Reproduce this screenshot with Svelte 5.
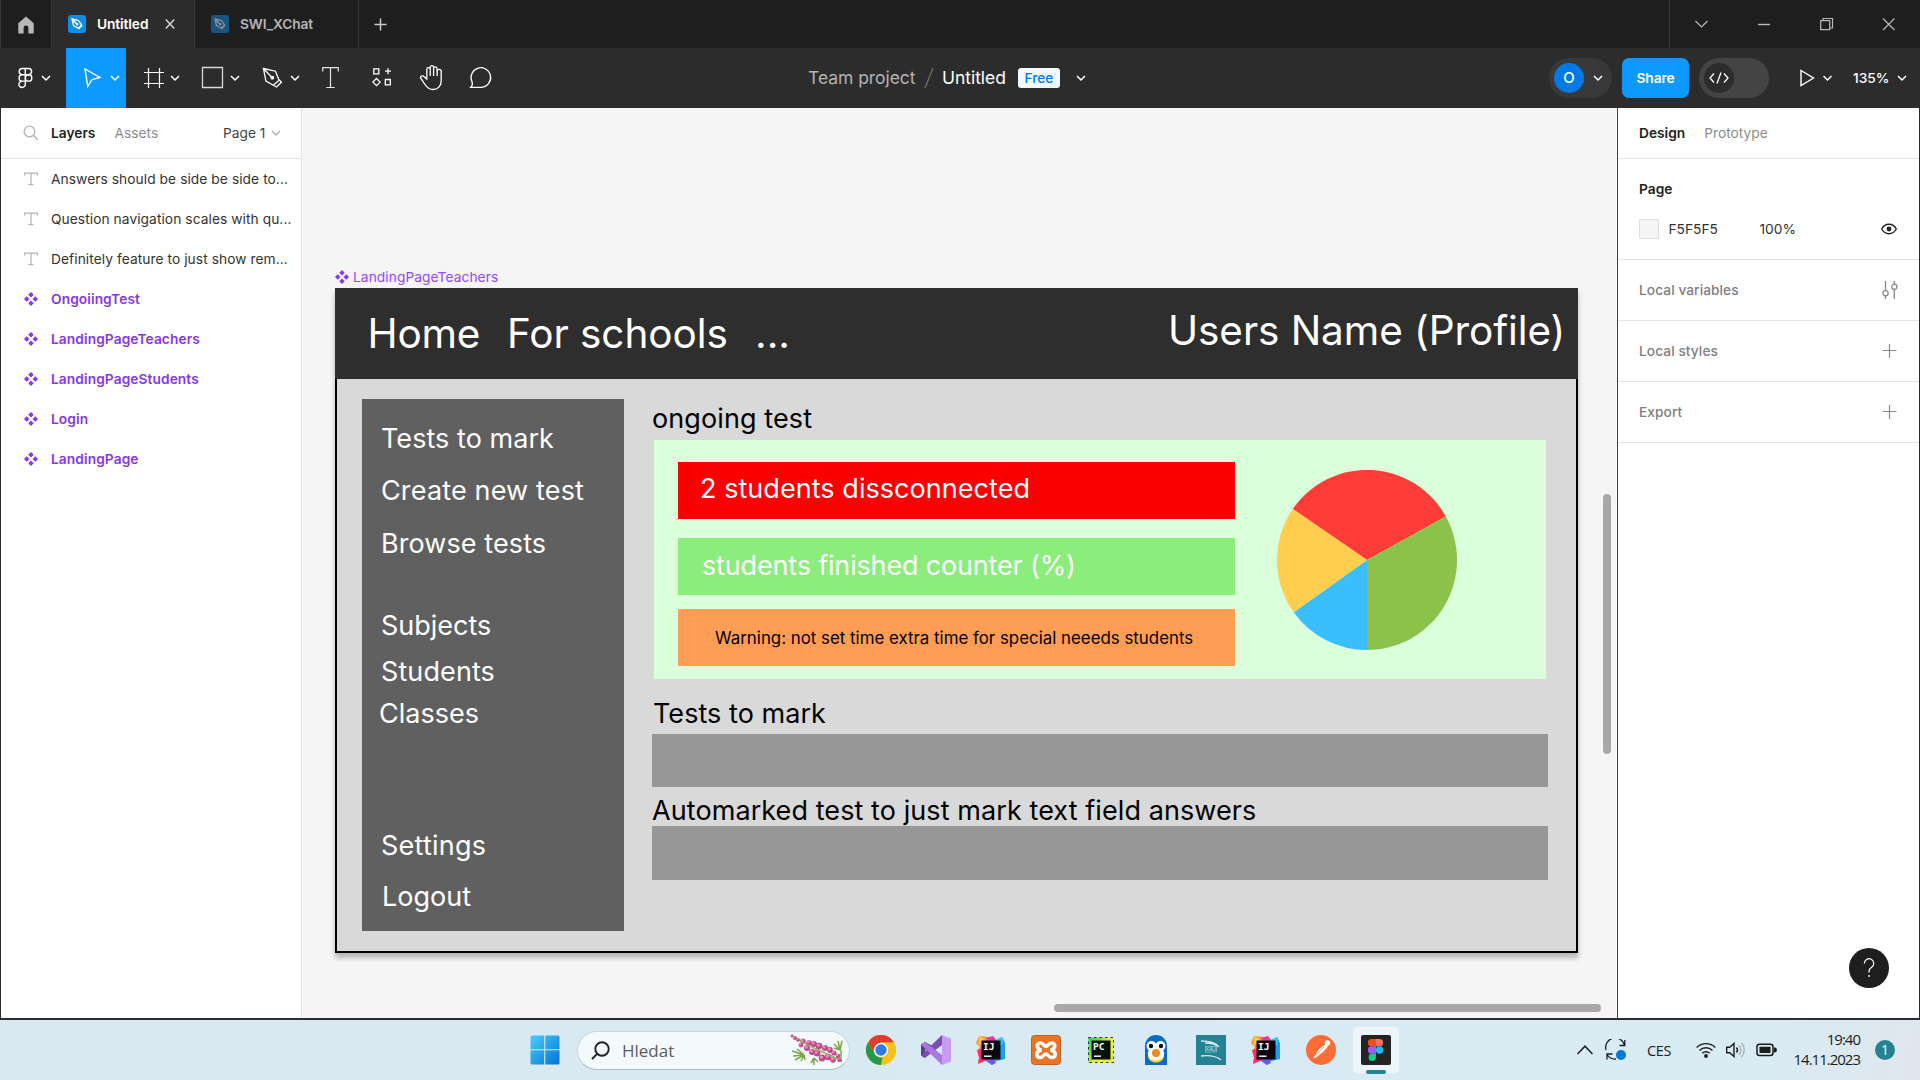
<script>
  const notes = [
    'Answers should be side be side to...',
    'Question navigation scales with qu...',
    'Definitely feature to just show rem...'
  ];
  const components = ['OngoiingTest', 'LandingPageTeachers', 'LandingPageStudents', 'Login', 'LandingPage'];

  // Shapes placed on the artboard, in canvas pixels relative to its corner.
  const shapes = [
    { x: 0, y: 0, w: 1243, h: 91, fill: '#2e2e2e' },
    { x: 27, y: 111, w: 262, h: 532, fill: '#606060' },
    { x: 319, y: 152, w: 892, h: 239, fill: '#daffda' },
    { x: 343, y: 174, w: 557, h: 57, fill: '#fa0000' },
    { x: 343, y: 250, w: 557, h: 57, fill: '#8bed7b' },
    { x: 343, y: 321, w: 557, h: 57, fill: '#ff9d57' },
    { x: 317, y: 446, w: 896, h: 53, fill: '#979797' },
    { x: 317, y: 538, w: 896, h: 54, fill: '#979797' }
  ];

  // Text layers: x is the left edge, base is the baseline, ls the tracking.
  const texts = [
    { t: 'Home', x: 32.5, base: 60, s: 40.5, c: '#fff', ls: -0.2 },
    { t: 'For schools', x: 172, base: 60, s: 40.5, c: '#fff', ls: -0.05 },
    { t: '...', x: 420, base: 60, s: 40.5, c: '#fff', ls: 0 },
    { t: 'Users Name (Profile)', x: 833, base: 57, s: 40.5, c: '#fff', ls: -0.08 },
    { t: 'Tests to mark', x: 46, base: 160, s: 27, c: '#fff', ls: 0.05 },
    { t: 'Create new test', x: 46, base: 212, s: 27, c: '#fff', ls: 0.15 },
    { t: 'Browse tests', x: 46, base: 264.5, s: 27, c: '#fff', ls: 0.08 },
    { t: 'Subjects', x: 46, base: 347, s: 27, c: '#fff', ls: 0 },
    { t: 'Students', x: 46, base: 393, s: 27, c: '#fff', ls: 0.1 },
    { t: 'Classes', x: 44, base: 435, s: 27, c: '#fff', ls: 0 },
    { t: 'Settings', x: 46, base: 567, s: 27, c: '#fff', ls: 0.25 },
    { t: 'Logout', x: 47, base: 618, s: 27, c: '#fff', ls: 0 },
    { t: 'ongoing test', x: 317, base: 140, s: 27, c: '#000', ls: 0.1 },
    { t: '2 students dissconnected', x: 365, base: 210, s: 27, c: '#fff', ls: 0.05 },
    { t: 'students finished counter (%)', x: 367, base: 286.5, s: 27, c: '#fff', ls: -0.17 },
    { t: 'Warning: not set time extra time for special neeeds students', x: 380, base: 356, s: 16.88, c: '#000', ls: 0 },
    { t: 'Tests to mark', x: 318, base: 435, s: 27, c: '#000', ls: 0.05 },
    { t: 'Automarked test to just mark text field answers', x: 317, base: 531.5, s: 27, c: '#000', ls: 0.08 }
  ];
  const topOf = (n) => n.base - Math.round(n.s * 0.969);

  const berries = [
    [2, 2, 1.4], [5, 4, 1.9], [8, 6, 1.8], [13, 7, 2.6], [11, 11, 2.4], [19, 9, 2.8], [17, 14, 3], [24, 10, 2.9], [22, 18, 3],
    [29, 12, 3.2], [27, 19, 3.4], [35, 14, 3], [32, 24, 3.4], [40, 16, 2.9], [38, 23, 3.2], [44, 19, 2.6], [43, 26, 2.8], [48, 22, 2.2], [49, 26, 2]
  ];
</script>

{#snippet chev(x, y, c = '#fff')}
  <path d="M{x - 4} {y - 2}l4 4 4-4" fill="none" stroke={c} stroke-width="1.5" />
{/snippet}

{#snippet diamonds()}
  <svg class="comp" width="14" height="14" viewBox="0 0 14 14">
    <path d="M7 0l2.7 2.7L7 5.4 4.3 2.7zM7 8.6l2.7 2.7L7 14l-2.700-2.700zM2.700 4.300L5.400 7 2.700 9.700 0 7zM11.300 4.300L14 7l-2.700 2.700L8.600 7z" />
  </svg>
{/snippet}

{#snippet fileIcon()}
  <svg width="18" height="18" viewBox="0 0 18 18">
    <rect width="18" height="18" rx="3" fill="#0d8de8" />
    <path d="M4 4l6.500 1.500 3 4.500-3.200 3.200-4.800-2.700zM4 4l5 5.200M10.500 14l3.600-3.600" fill="none" stroke="#fff" stroke-width="1.300" />
    <circle cx="9.200" cy="9.200" r="1.200" fill="#fff" />
  </svg>
{/snippet}

{#snippet intellij()}
  <svg width="30" height="30" viewBox="0 0 30 30">
    <path d="M3 1l10 1 3 8-10 12-4 6 2-9-3-3 3-4-4-4z" fill="#ff8a3c" />
    <path d="M1 15l8-2 6 12-6 1-7 3 1-6z" fill="#ff2d6f" />
    <path d="M3 1l6 3-3 5-4 1z" fill="#ffc64d" />
    <path d="M10 3l7-2 4 5-8 2z" fill="#f0359b" />
    <path d="M20 5l6-3 3 6v16l-9 2-4 4-6-4 10-5z" fill="#159ff5" />
    <path d="M20 5l6-3 1 7-5 3z" fill="#2fc8f7" />
    <path d="M10 25l8-1 2 4-4 2z" fill="#7457e8" />
    <rect x="5.500" y="5.500" width="19" height="19" fill="#0b0510" />
    <text class="ide" x="7" y="14.500">IJ</text>
    <rect x="8" y="20.500" width="7.500" height="1.400" fill="#fff" />
  </svg>
{/snippet}

<div class="screen">
  <header class="tabs">
    <div class="home">
      <svg width="18" height="18" viewBox="0 0 18 18"><path d="M9 .5l7.700 6.700V17.500h-5.300V12a2.400 2.400 0 0 0-4.800 0v5.500H1.300V7.200z" fill="#b8b8b8" /></svg>
    </div>
    <div class="tab active">
      {@render fileIcon()}
      <span>Untitled</span>
      <svg class="x" width="10" height="10" viewBox="0 0 10 10"><path d="M.800.600l8.400 8.800M9.200.600L.800 9.400" stroke="#d5d5d5" stroke-width="1.500" /></svg>
    </div>
    <div class="tab second">
      <i>{@render fileIcon()}</i>
      <span>SWI_XChat</span>
    </div>
    <div class="add"><svg width="13" height="13" viewBox="0 0 13 13"><path d="M6.500.500v12M.500 6.500h12" stroke="#c9c9c9" stroke-width="1.500" /></svg></div>
    <div class="window">
      <svg width="250" height="48" viewBox="0 0 250 48" fill="none" stroke="#b9b9b9" stroke-width="1.200">
        <path d="M25.500 21l6 6 6-6" />
        <path d="M88 24.500h12" stroke-width="1.400" />
        <path d="M150.700 20.700h9v9h-9zM153 20.500v-2h9.500v9.500h-2.500" />
        <path d="M213 18.500l11.500 11.500M224.500 18.500L213 30" />
      </svg>
    </div>
  </header>

  <div class="toolbar">
    <div class="tools">
      <svg width="66" height="60" viewBox="0 48 66 60" fill="none" stroke="#fff" stroke-width="1.400">
        <path d="M25.300 68.500h-3a3.100 3.100 0 0 0 0 6.200h3zM25.300 68.500h3.200a3.100 3.100 0 0 1 0 6.200h-3.200zM25.300 74.700h-3a3.200 3.200 0 0 0 0 6.400h3zM25.300 81.100h-3a3.200 3.200 0 1 0 3 3.200z" />
        <circle cx="28.600" cy="77.900" r="3.200" />
        {@render chev(46, 78)}
      </svg>
      <svg class="on" width="60" height="60" viewBox="66 48 60 60" fill="none" stroke="#fff" stroke-width="1.400">
        <path d="M85 69l15 8.500-8 2-4.300 7z" />
        {@render chev(115, 78)}
      </svg>
      <svg width="60" height="60" viewBox="126 48 60 60" fill="none" stroke="#fff" stroke-width="1.200">
        <path d="M148.500 68v20M159.500 68v20M144 72.500h20M144 83.500h20" />
        {@render chev(175, 78)}
      </svg>
      <svg width="60" height="60" viewBox="186 48 60 60" fill="none" stroke="#fff" stroke-width="1.300">
        <path d="M202.500 67.500h20v20h-20z" stroke="#d8d8d8" />
        {@render chev(235, 78)}
      </svg>
      <svg width="60" height="60" viewBox="246 48 60 60" fill="none" stroke="#fff" stroke-width="1.300">
        <path d="M263.500 68.500l12 2.700 3.600 9-5.800 5-7.400-4.200zM263.500 68.500l8 8.500M273.300 85.300l3.200 1.700 5-4.800-2.400-2.400" />
        <circle cx="272.300" cy="77.700" r="1.900" fill="#fff" stroke="none" />
        {@render chev(295, 78)}
      </svg>
      <svg width="50" height="60" viewBox="306 48 50 60" fill="none" stroke="#e6e6e6" stroke-width="1.200">
        <path d="M322.700 71.500v-3.800h15.600v3.800M330.500 68v19.500M326.300 87.500h8.400" />
      </svg>
      <svg width="50" height="60" viewBox="356 48 50 60" fill="none" stroke="#fff" stroke-width="1.300">
        <path d="M373.800 68.800h5v5h-5zM385.300 79.500h5v5.300h-5zM376.500 78.500l3.600 3.600-3.600 3.600-3.600-3.600zM388 68.200v6M385 71.200h6" />
      </svg>
      <svg width="50" height="60" viewBox="406 48 50 60" fill="none" stroke="#fff" stroke-width="1.300">
        <path d="M426.800 79v-9.700a1.700 1.700 0 0 1 3.400 0v-2a1.700 1.700 0 0 1 3.400 0v1.200a1.700 1.700 0 0 1 3.400 0v3a2 2 0 0 1 4.200 0v9.500c0 5-3.500 8.500-8.200 8.500-4 0-6-2-8-5l-4.300-6.300c-1-2.200 2-3.200 3.500-1.500zM430.200 69v7M433.600 68.500v7.500M437.200 71v5" />
      </svg>
      <svg width="50" height="60" viewBox="456 48 50 60" fill="none" stroke="#fff" stroke-width="1.300">
        <path d="M470.800 87.300c1.500-1.600 1.900-3.400 1.300-5.300a9.800 9.800 0 1 1 9.500 5.300z" />
      </svg>
    </div>
    <div class="title">
      <span class="team">Team project</span>
      <svg width="10" height="22" viewBox="0 0 10 22"><path d="M1 21L9 1" stroke="#6e6e6e" stroke-width="1.300" /></svg>
      <span class="name">Untitled</span>
      <b>Free</b>
      <svg width="10" height="8" viewBox="0 0 10 8">{@render chev(5, 4)}</svg>
    </div>
    <div class="actions">
      <div class="user"><span>O</span><svg width="10" height="8" viewBox="0 0 10 8">{@render chev(5, 4)}</svg></div>
      <div class="share">Share</div>
      <div class="toggle"><span><svg width="20" height="12" viewBox="0 0 20 12" fill="none" stroke="#fff" stroke-width="1.300"><path d="M5 1.500L1 6l4 4.500M15 1.500L19 6l-4 4.500M12 .500L8 11.500" /></svg></span></div>
      <svg class="play" width="40" height="20" viewBox="0 0 40 20"><path d="M2 2.500l12.500 7.500L2 17.500z" fill="none" stroke="#fff" stroke-width="1.400" />{@render chev(28.500, 10)}</svg>
      <span class="pct">135%</span>
      <svg width="10" height="8" viewBox="0 0 10 8">{@render chev(5, 4)}</svg>
    </div>
  </div>

  <main>
    <aside class="left">
      <div class="lhead">
        <svg width="16" height="16" viewBox="0 0 16 16" fill="none" stroke="#b3b3b3" stroke-width="1.300"><circle cx="6.500" cy="6.500" r="5.300" /><path d="M10.500 10.500l4.300 4.300" /></svg>
        <strong>Layers</strong><span class="dim">Assets</span><span class="page">Page 1</span>
        <svg width="10" height="8" viewBox="0 0 10 8">{@render chev(5, 4, '#b3b3b3')}</svg>
      </div>
      {#each notes as n}
        <div class="row">
          <svg width="14" height="14" viewBox="0 0 14 14" fill="none" stroke="#b3b3b3" stroke-width="1.200"><path d="M.600 3.500V1.200h12.800v2.300M7 1v11.600M4.500 12.600h5" /></svg>
          <span>{n}</span>
        </div>
      {/each}
      {#each components as n}
        <div class="row purple">{@render diamonds()}<span>{n}</span></div>
      {/each}
    </aside>

    <section class="canvas">
      <div class="label">{@render diamonds()}<span>LandingPageTeachers</span></div>
      <div class="board">
        {#each shapes as r}
          <div class="shape" style="left:{r.x}px;top:{r.y}px;width:{r.w}px;height:{r.h}px;background:{r.fill}"></div>
        {/each}
        <svg class="pie" width="180" height="180" viewBox="-90 -90 180 180">
          <path d="M0 0L-74.200-51A90 90 0 0 1 78.800-43.500z" fill="#ff3c38" />
          <path d="M0 0L78.800-43.500A90 90 0 0 1 0 90z" fill="#8bc34a" />
          <path d="M0 0V90A90 90 0 0 1-73.300 52.200z" fill="#3bbeff" />
          <path d="M0 0L-73.300 52.200A90 90 0 0 1-74.200-51z" fill="#ffce4e" />
        </svg>
        {#each texts as n}
          <span class="txt" style="left:{n.x}px;top:{topOf(n)}px;font-size:{n.s}px;letter-spacing:{n.ls}px;color:{n.c}">{n.t}</span>
        {/each}
      </div>
      <div class="vbar"></div>
      <div class="hbar"></div>
    </section>

    <aside class="right">
      <div class="rhead"><strong>Design</strong><span class="dim">Prototype</span></div>
      <div class="pagebox">
        <strong>Page</strong>
        <div class="fill">
          <i></i><span class="hex">F5F5F5</span><span>100%</span>
          <svg width="16" height="12" viewBox="0 0 16 12"><path d="M.700 6C4-.300 12-.300 15.300 6 12 12.300 4 12.300.700 6z" fill="none" stroke="#222" stroke-width="1.400" /><circle cx="8" cy="6" r="2.400" fill="#222" /></svg>
        </div>
      </div>
      <div class="opt"><span>Local variables</span>
        <svg width="16" height="18" viewBox="0 0 16 18" fill="none" stroke="#888" stroke-width="1.300"><path d="M3.500 0v9.500M3.500 15v3M12.300 0v3M12.300 8.500V18" /><circle cx="3.500" cy="12.200" r="2.600" /><circle cx="12.300" cy="5.800" r="2.600" /></svg>
      </div>
      <div class="opt"><span>Local styles</span><svg width="16" height="14" viewBox="0 0 16 14"><path d="M7.500 0v14M.500 6.500h14" stroke="#8c8c8c" stroke-width="1.200" /></svg></div>
      <div class="opt"><span>Export</span><svg width="16" height="14" viewBox="0 0 16 14"><path d="M7.500 0v14M.500 6.500h14" stroke="#8c8c8c" stroke-width="1.200" /></svg></div>
      <div class="help"><svg width="12" height="20" viewBox="0 0 12 20"><path d="M1.300 5.500a4.700 4.700 0 1 1 7.400 3.800C6.500 11 6 11.500 6 14.500" fill="none" stroke="#fff" stroke-width="1.200" /><circle cx="6" cy="18" r=".900" fill="#fff" /></svg></div>
    </aside>
  </main>

  <footer>
    <svg class="win" width="30" height="30" viewBox="0 0 30 30">
      <defs><linearGradient id="w" x1="0" y1="0" x2="1" y2="1"><stop offset="0" stop-color="#4cccfb" /><stop offset="1" stop-color="#0274d4" /></linearGradient></defs>
      <path d="M2 .500h12.200v13.700H.500V2A1.500 1.500 0 0 1 2 .500zM15.300.500H28A1.500 1.500 0 0 1 29.500 2v12.200H15.300zM.500 15.300h13.700v14.200H2A1.500 1.500 0 0 1 .500 28zM15.300 15.300h14.200V28a1.500 1.500 0 0 1-1.500 1.500H15.300z" fill="url(#w)" />
    </svg>
    <div class="search">
      <svg width="19" height="19" viewBox="0 0 19 19" fill="none" stroke="#222" stroke-width="1.900"><circle cx="11" cy="8" r="6.700" /><path d="M6.200 12.800L1 18" /></svg>
      <span>Hledat</span>
      <svg class="flower" width="54" height="32" viewBox="0 0 54 32">
        <g stroke="#7da648" stroke-width="1.500" fill="none">
          <path d="M4 3l20 11 28 13" />
          <path d="M14 21L2 17M14 21L3 22M14 21L5 26M14 21l-3 6M14 21l-7-6M14 21l1 5" />
          <path d="M50 16l-6-6M50 16l-2-9M50 16l2-9M50 16l-6-2M51 28V16" />
          <path d="M24 24l-3 5M24 24l0 7M24 24l4 4" />
        </g>
        {#each berries as b}<circle cx={b[0]} cy={b[1]} r={b[2]} fill="#c2478b" /><circle cx={b[0] - 0.700} cy={b[1] - 0.900} r={b[2] * 0.500} fill="#e88fbf" />{/each}
        <path d="M10 7l38 19" stroke="#a5c977" stroke-width="1" />
      </svg>
    </div>
    <div class="apps">
      <div><svg width="30" height="30" viewBox="-15 -15 30 30">
        <circle r="15" fill="#fbc116" />
        <path d="M-13-7.500A15 15 0 0 1 13-7.500L6.500-7.500H0L-6.500 3.700z" fill="#e33b2e" />
        <path d="M-13-7.500L-6.500 3.750A7.500 7.500 0 0 0 1.500 7.300L0 15A15 15 0 0 1-13-7.500z" fill="#249a48" />
        <path d="M6.500 3.750L0 15A15 15 0 0 0 13-7.500H0z" fill="#fbc116" />
        <circle r="7.200" fill="#fff" /><circle r="5.700" fill="#2f7bea" />
      </svg></div>
      <div><svg width="30" height="30" viewBox="0 0 30 30">
        <path d="M0 9.500L4 7v16l-4-2.500z" fill="#5f3d93" /><path d="M4 7l6.500 3.500L4 15.500z" fill="#5f3d93" />
        <path d="M0 20.500l4 2.500L21 10V0z" fill="#7a4eb0" /><path d="M0 9.500l4-2.500L21 20v10z" fill="#a878df" />
        <path d="M21 0l9 3.500v23L21 30z" fill="#c79bf5" />
      </svg></div>
      <div>{@render intellij()}</div>
      <div><svg width="30" height="30" viewBox="0 0 30 30">
        <rect x=".500" y=".500" width="29" height="29" rx="3" fill="#ea7425" stroke="#bd6322" />
        <path d="M10.500 15C5 14 5 8 9.500 8c3 0 3.500 3.500 5.500 3.500S17.500 8 20.500 8c4.500 0 4.500 6-1 7 6 1 6 7.500 1.500 7.500-3.500 0-4-3.500-6-3.500s-2.500 3.500-6 3.500c-4.500 0-4.500-6.500 1.500-7.500z" fill="none" stroke="#fff" stroke-width="3.600" />
      </svg></div>
      <div><svg width="30" height="30" viewBox="0 0 30 30">
        <defs><linearGradient id="pc" x1="0" y1="0" x2="1" y2=".700"><stop offset="0" stop-color="#21d789" /><stop offset=".300" stop-color="#5fe03c" /><stop offset=".600" stop-color="#e9ee3c" /></linearGradient></defs>
        <path d="M2.500 2.500h25v25h-25z" fill="url(#pc)" stroke="#222" stroke-width=".900" stroke-dasharray="2.500 3" />
        <rect x="5.500" y="5.500" width="19" height="19" fill="#07110b" />
        <text class="ide" x="7" y="14.500">PC</text><rect x="8" y="20.500" width="7" height="1.400" fill="#fff" />
      </svg></div>
      <div><svg width="24" height="30" viewBox="0 0 24 30">
        <path d="M1 30V11a11 11 0 0 1 22 0v19z" fill="#0a6bc4" /><path d="M4 19h16v2c0 4-4 6.500-8 6.500s-8-2.500-8-6.500z" fill="#ffd83c" />
        <circle cx="7.500" cy="11" r="5" fill="#fff" /><circle cx="16.500" cy="11" r="5" fill="#fff" /><ellipse cx="12" cy="18.500" rx="8.200" ry="6.800" fill="#fff" />
        <circle cx="7" cy="11" r="2.200" fill="#111" /><circle cx="17" cy="11" r="2.200" fill="#111" /><circle cx="12" cy="18" r="4" fill="#f08a1c" />
      </svg></div>
      <div><svg width="30" height="30" viewBox="0 0 30 30">
        <rect width="30" height="30" fill="#258292" />
        <path d="M5 6c8 0 14 1 18 6M5 21c8-1 15 0 20 4M9 8c6 0 10 1 12 3" fill="none" stroke="#d5e9ec" stroke-width="1.300" />
        <rect x="9.500" y="11.500" width="11" height="5.500" fill="none" stroke="#8fc0c8" stroke-width=".800" /><text class="kali" x="10.200" y="16">KALI</text>
      </svg></div>
      <div>{@render intellij()}</div>
      <div><svg width="30" height="30" viewBox="0 0 30 30">
        <circle cx="15" cy="15" r="15" fill="#ff6c37" /><circle cx="21.500" cy="8" r="2.700" fill="#fff" />
        <path d="M19.500 9.500l2.500 2-5 5.500-7 5.500-3 1 3-4.500 3-5z" fill="#fff" /><path d="M10 20l8-8" stroke="#ff6c37" stroke-width=".700" />
      </svg></div>
      <div class="current"><svg width="30" height="30" viewBox="0 0 30 30">
        <rect width="30" height="30" rx="2" fill="#242424" />
        <path d="M15 4h-4.500a3.600 3.600 0 0 0 0 7.300H15z" fill="#f24e1e" /><path d="M15 4h3.500a3.600 3.600 0 0 1 0 7.300H15z" fill="#ff7262" />
        <path d="M15 11.300h-4.500a3.600 3.600 0 0 0 0 7.300H15z" fill="#a259ff" /><circle cx="18.600" cy="15" r="3.650" fill="#1abcfe" />
        <path d="M15 18.600h-4a3.700 3.700 0 1 0 4 3.700z" fill="#0acf83" />
      </svg></div>
    </div>
    <div class="tray">
      <svg width="16" height="10" viewBox="0 0 16 10"><path d="M.500 9L8 1.200 15.500 9" fill="none" stroke="#1c1c1c" stroke-width="1.500" /></svg>
      <svg class="sync" width="22" height="22" viewBox="0 0 22 22"><g fill="none" stroke="#1c1c1c" stroke-width="1.300"><path d="M1 11A9.500 9.500 0 0 1 19.500 6M19.800 1v5.500H14.500M7.500 15H2v5.500M2 15.500c2 3 5 5 9 4.500" /></g><circle cx="16" cy="16" r="5" fill="#0078d7" /></svg>
      <span class="lang">CES</span>
      <svg class="wifi" width="20" height="16" viewBox="0 0 20 16" fill="none" stroke="#1c1c1c" stroke-width="1.400"><path d="M.700 5.500a13.200 13.200 0 0 1 18.600 0M3.500 8.500a9.200 9.200 0 0 1 13 0M6.300 11.300a5.200 5.200 0 0 1 7.400 0" /><circle cx="10" cy="14" r="1.200" fill="#1c1c1c" /></svg>
      <svg class="vol" width="20" height="16" viewBox="0 0 20 16" fill="none" stroke="#1c1c1c" stroke-width="1.400"><path d="M.700 5.300h3L8 1.500v13L3.700 10.700h-3z" /><path d="M10.500 5.500a4 4 0 0 1 0 5" /><path d="M13 3.300a7 7 0 0 1 0 9.400M15.500 1a10.400 10.400 0 0 1 0 14" stroke="#a9b4ba" /></svg>
      <svg class="bat" width="21" height="14" viewBox="0 0 21 14"><rect x="1" y="1.200" width="16" height="11.400" rx="2.500" fill="none" stroke="#1c1c1c" stroke-width="1.500" /><rect x="3.500" y="3.700" width="11" height="6.400" rx=".500" fill="#1c1c1c" /><path d="M18.500 4.800l1.700.700v3l-1.700.700z" fill="#1c1c1c" stroke="#1c1c1c" /></svg>
      <div class="clock"><span>19:40</span><span>14.11.2023</span></div>
      <b>1</b>
    </div>
  </footer>
</div>

<style>
  :global(body) { overflow: hidden; }
  .screen { width: 1920px; height: 1080px; display: flex; flex-direction: column; font-family: Inter, sans-serif; font-size: 13.75px; color: #222; background: #f5f5f5; }
  .screen :global(*) { box-sizing: border-box; }
  svg { display: block; flex: none; }
  span, strong, b { white-space: nowrap; }
  strong { font-weight: 600; }

  .tabs { display: flex; height: 48px; background: #1e1e1e; border-left: 1px solid #383838; }
  .home { width: 51px; border-right: 1px solid #383838; display: grid; place-items: center; padding-top: 1px; }
  .tab { display: flex; align-items: center; font-weight: 600; letter-spacing: -0.1px; }
  .tab span { margin-left: 11px; }
  .active { width: 142px; padding-left: 16px; background: #2c2c2c; color: #fff; }
  .x { margin-left: 17px; }
  .second { width: 165px; padding-left: 16px; border: solid #383838; border-width: 0 1px; color: #b5b5b5; }
  .second i { opacity: 0.5; }
  .add { padding: 18px 0 0 15px; }
  .window { margin-left: auto; width: 251px; border-left: 1px solid #383838; }

  .toolbar { display: flex; height: 60px; background: #2c2c2c; color: #fff; }
  .tools { display: flex; width: 808px; }
  .on { background: #0d99ff; }
  .title { display: flex; align-items: center; width: 741px; font-size: 17.5px; letter-spacing: -0.05px; }
  .team { color: #b3b3b3; width: 116px; }
  .title .team, .title .name { padding-bottom: 2px; }
  .name { width: 76px; margin-left: 8px; }
  .title b { width: 42px; height: 20px; border-radius: 3px; background: #f2f9ff; color: #007be5; font: 500 13.75px/20px Inter, sans-serif; text-align: center; margin-right: 16px; }
  .actions { display: flex; align-items: center; }
  .user { display: flex; align-items: center; width: 63px; height: 40px; border-radius: 20px; background: #383838; padding-left: 5px; gap: 9px; }
  .user span { width: 30px; height: 30px; border-radius: 50%; background: #007be5; text-align: center; font: 500 15px/30px Inter, sans-serif; }
  .share { width: 67px; height: 40px; margin: 0 10px; border-radius: 7px; background: #0d99ff; font: 600 13.75px/40px Inter, sans-serif; text-align: center; letter-spacing: -0.1px; }
  .toggle { width: 70px; height: 40px; border-radius: 20px; background: #444; padding: 5px; }
  .toggle span { display: grid; place-items: center; width: 30px; height: 30px; border-radius: 50%; background: #2c2c2c; }
  .play { margin-left: 30px; }
  .pct { margin-left: 14px; width: 44px; font-weight: 500; }

  main { display: flex; height: 910px; }
  .left { width: 302px; background: #fff; border-left: 1px solid #2c2c2c; border-right: 1px solid #e5e5e5; }
  .lhead { display: flex; align-items: center; height: 51px; border-bottom: 1px solid #e5e5e5; padding-left: 22px; }
  .lhead strong { margin-left: 12px; width: 63.5px; }
  .dim { color: #8c8c8c; }
  .page { margin-left: auto; width: 48px; color: #444; }
  .lhead svg:last-child { margin-right: 20px; }
  .row { display: flex; align-items: center; height: 40px; padding-left: 23px; gap: 13px; color: #333; letter-spacing: 0.07px; }
  .purple { color: #8638e5; font-weight: 600; letter-spacing: 0.08px; }
  .comp { fill: #8638e5; }

  .canvas { position: relative; flex: 1; background: #f5f5f5; }
  .label { position: absolute; left: 33px; top: 161px; display: flex; align-items: center; gap: 4px; color: #9747ff; letter-spacing: 0.07px; }
  .board { position: absolute; left: 33px; top: 180px; width: 1243px; height: 665px; background: #d9d9d9; border: 2px solid #000; box-shadow: 0 5px 5px rgba(0, 0, 0, 0.25); }
  .shape, .txt, .pie { position: absolute; }
  .board .shape, .board .txt, .board .pie { margin: -2px 0 0 -2px; }
  .pie { left: 942px; top: 182px; }
  .txt { line-height: normal; }
  .vbar { position: absolute; right: 6px; top: 386px; width: 8px; height: 260px; border-radius: 4px; background: #a8a8a8; }
  .hbar { position: absolute; left: 752px; top: 896px; width: 547px; height: 8px; border-radius: 4px; background: #a8a8a8; }

  .right { position: relative; width: 303px; background: #fff; border-left: 1px solid #444; border-right: 1px solid #2c2c2c; }
  .rhead { display: flex; align-items: center; height: 51px; border-bottom: 1px solid #e5e5e5; padding-left: 21px; gap: 19px; }
  .pagebox { height: 101px; border-bottom: 1px solid #e5e5e5; padding: 22px 22px 0 21px; }
  .fill { display: flex; align-items: center; margin-top: 22px; height: 20px; color: #333; }
  .fill i { width: 20px; height: 20px; background: #f5f5f5; border: 1px solid #e0e0e0; margin-right: 9.500px; }
  .hex { width: 91px; }
  .fill svg { margin-left: auto; }
  .opt { display: flex; align-items: center; justify-content: space-between; height: 61px; border-bottom: 1px solid #e5e5e5; padding: 0 21px; color: #808080; font-weight: 500; letter-spacing: 0.05px; }
  .help { position: absolute; right: 30px; bottom: 30px; width: 40px; height: 40px; border-radius: 50%; background: #1e1e1e; display: grid; place-items: center; }

  footer { display: flex; align-items: center; height: 62px; border-top: 2px solid #2c2c2c; background: linear-gradient(100deg, #d9e8f1 0%, #d8eaf3 60%, #d9ebf3 92%, #e0e6ef 100%); font-family: 'Open Sans', sans-serif; color: #1c1c1c; }
  .win { margin-left: 529.500px; }
  .search { display: flex; align-items: center; width: 273px; height: 39px; margin-left: 17.500px; padding-left: 13px; border-radius: 20px; background: #f4f9fc; border: 1px solid #c5d6df; border-bottom-color: #aabcc5; font-size: 17px; color: #5c5c5c; }
  .search span { margin-left: 12px; }
  .flower { margin-left: auto; margin-right: 5px; }
  .apps { display: flex; margin-left: 3px; }
  .apps div { width: 55px; height: 48px; display: grid; place-items: center; }
  .apps .current { width: 48px; margin-left: 4px; border-radius: 5px; background: #edf4fa; border: 1px solid #e2ebf2; position: relative; }
  .current::after { content: ''; position: absolute; left: 13px; bottom: -1px; width: 20px; height: 4px; border-radius: 2px; background: #258292; }
  .ide { font: 700 9.500px 'DejaVu Sans Mono', monospace; fill: #fff; }
  .kali { font: 4.500px 'Liberation Sans', sans-serif; fill: #d5e9ec; }
  .tray { display: flex; align-items: center; margin-left: auto; padding-right: 25px; }
  .sync { margin-left: 12px; }
  .lang { margin-left: 20px; width: 26px; font-size: 14.500px; letter-spacing: -0.4px; }
  .wifi { margin-left: 23px; }
  .vol { margin-left: 10px; }
  .bat { margin-left: 10px; }
  .clock { width: 83px; text-align: right; font-size: 15px; line-height: 20px; letter-spacing: -1px; display: flex; flex-direction: column; padding-bottom: 2px; }
  .tray b { margin-left: 15px; width: 20px; height: 20px; border-radius: 50%; background: #258292; color: #fff; font: 400 14px/20px 'Open Sans', sans-serif; text-align: center; }
</style>
